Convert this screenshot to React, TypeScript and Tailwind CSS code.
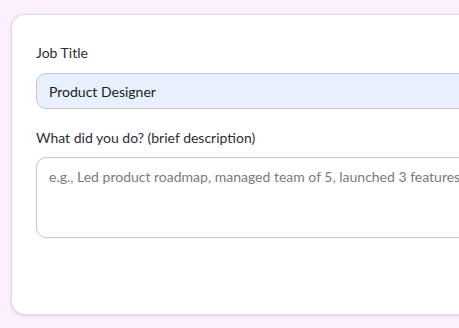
export default function App() {
  return (
    <div className="min-h-screen w-full overflow-hidden bg-[#fbf0fd] pt-[14px] pl-[11px] font-['Lato',sans-serif]">
      <div className="w-[640px] h-[301px] rounded-[14px] border border-[#e2dbe6] bg-white shadow-[0_1px_3px_rgba(120,100,140,0.25)] px-6 pt-[28px]">
        <label className="block text-[14px] leading-5 text-[#2d2d33] mb-[10px]">Job Title</label>
        <input
          type="text"
          defaultValue="Product Designer"
          className="block w-[560px] h-[36px] rounded-[10px] border border-[#c6c6ce] bg-[#e8f0fe] px-3 text-[14px] text-[#1c1c22] outline-none"
        />
        <label className="block mt-[19px] mb-[9px] text-[14px] leading-5 text-[#2d2d33]">
          What did you do? (brief description)
        </label>
        <textarea
          placeholder="e.g., Led product roadmap, managed team of 5, launched 3 features"
          className="block w-[560px] h-[81px] resize-none rounded-[10px] border border-[#c6c6ce] bg-white px-3 py-[7px] text-[14px] leading-6 text-[#1c1c22] placeholder:text-[#7a7a85] outline-none"
        />
      </div>
    </div>
  );
}
